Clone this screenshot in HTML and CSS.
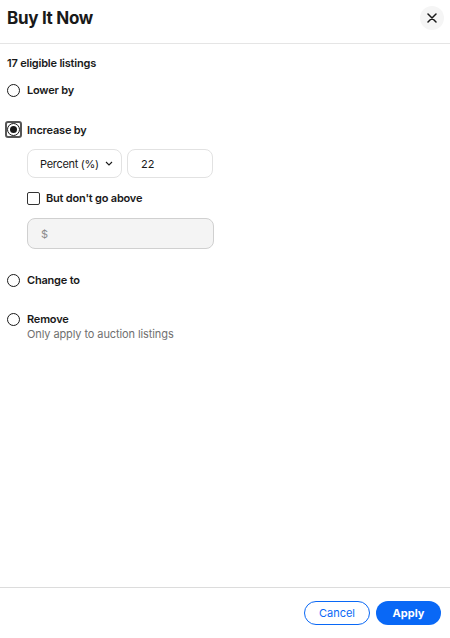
FILE: index.html
```html
<!DOCTYPE html>
<html>
<head>
<meta charset="utf-8">
<link rel="stylesheet" href="styles.css">
</head>
<body>
<div class="panel">
  <header class="head">
    <h1 class="title">Buy It Now</h1>
    <button class="close" aria-label="Close">
      <svg width="10" height="10" viewBox="0 0 10 10"><path d="M1 1 L9 9 M9 1 L1 9" stroke="#191919" stroke-width="1.5" stroke-linecap="round"/></svg>
    </button>
  </header>
  <main class="body">
    <div class="count">17 eligible listings</div>
    <label class="opt opt-lower"><span class="radio"></span><span class="lbl">Lower by</span></label>
    <label class="opt opt-inc"><span class="focus"><span class="radio on"><span class="dot"></span></span></span><span class="lbl">Increase by</span></label>
    <div class="sub">
      <div class="row">
        <div class="select">Percent (%)<svg width="8" height="5" viewBox="0 0 8 5"><path d="M1 1 L4 4 L7 1" fill="none" stroke="#191919" stroke-width="1.1"/></svg></div>
        <div class="input">22</div>
      </div>
      <label class="check"><span class="box"></span><span class="lbl">But don't go above</span></label>
      <div class="input wide disabled">$</div>
    </div>
    <label class="opt opt-change"><span class="radio"></span><span class="lbl">Change to</span></label>
    <label class="opt opt-remove"><span class="radio"></span><span class="lbl">Remove</span></label>
    <div class="hint">Only apply to auction listings</div>
  </main>
  <footer class="foot">
    <button class="btn cancel">Cancel</button>
    <button class="btn apply">Apply</button>
  </footer>
</div>
</body>
</html>
```
FILE: styles.css
```css
* { box-sizing: border-box; }
html, body { margin: 0; padding: 0; background: #fff; }
body { font-family: Inter, "Liberation Sans", sans-serif; color: #191919; }
.panel { width: 450px; height: 638px; display: flex; flex-direction: column; }
.head { height: 44px; border-bottom: 1px solid #e5e5e5; display: flex; align-items: center; justify-content: space-between; padding: 0 6px 0 7px; flex: none; }
.title { margin: 0; font-size: 17px; font-weight: 700; letter-spacing: -0.3px; margin-top: -8px; }
.close { width: 24px; height: 24px; border-radius: 50%; border: 0; background: #f5f5f5; display: flex; align-items: center; justify-content: center; padding: 0; margin-top: -8px; }
.body { flex: 1; padding: 12px 7px 0 7px; }
.count { font-size: 11px; font-weight: 600; letter-spacing: -0.2px; line-height: 14px; }
.opt { display: flex; align-items: center; gap: 7px; font-size: 11px; font-weight: 600; letter-spacing: -0.2px; line-height: 14px; }
.opt-lower { margin-top: 13px; }
.opt-inc { margin-top: 24px; margin-left: -2px; gap: 5px; }
.opt-change { margin-top: 24px; }
.opt-remove { margin-top: 25px; }
.radio { width: 13px; height: 13px; border-radius: 50%; border: 1px solid #191919; display: flex; align-items: center; justify-content: center; flex: none; background: #fff; }
.dot { width: 7px; height: 7px; border-radius: 50%; background: #191919; }
.focus { width: 17px; height: 17px; border: 2px solid #555; border-radius: 3px; display: flex; align-items: center; justify-content: center; }
.sub { padding-left: 20px; margin-top: 11px; }
.row { display: flex; gap: 5px; }
.select { width: 95px; height: 29px; border: 1px solid #e2e2e2; border-radius: 8px; display: flex; align-items: center; gap: 6px; padding-left: 12px; font-size: 11px; letter-spacing: -0.3px; }
.input { width: 86px; height: 29px; border: 1px solid #e2e2e2; border-radius: 8px; display: flex; align-items: center; padding-left: 13px; font-size: 11px; }
.check { display: flex; align-items: center; gap: 6px; margin-top: 13px; font-size: 11px; font-weight: 600; letter-spacing: -0.2px; line-height: 14px; }
.box { width: 13px; height: 13px; border: 1px solid #333; border-radius: 2px; }
.input.wide { width: 187px; height: 31px; margin-top: 13px; }
.disabled { background: #f4f4f4; border-color: #d0d0d0; color: #8a8a8a; }
.hint { padding-left: 20px; font-size: 11px; color: #707070; line-height: 14px; margin-top: 1px; letter-spacing: -0.1px; }
.foot { height: 51px; border-top: 1px solid #dcdcdc; display: flex; justify-content: flex-end; align-items: center; gap: 6px; padding: 0 9px 0 0; flex: none; }
.btn { height: 24px; border-radius: 12px; font-family: inherit; font-size: 11px; padding: 0; }
.cancel { width: 66px; background: #fff; color: #0968f6; border: 1px solid #0968f6; }
.apply { width: 65px; background: #0968f6; color: #fff; border: 0; font-weight: 700; }
```
